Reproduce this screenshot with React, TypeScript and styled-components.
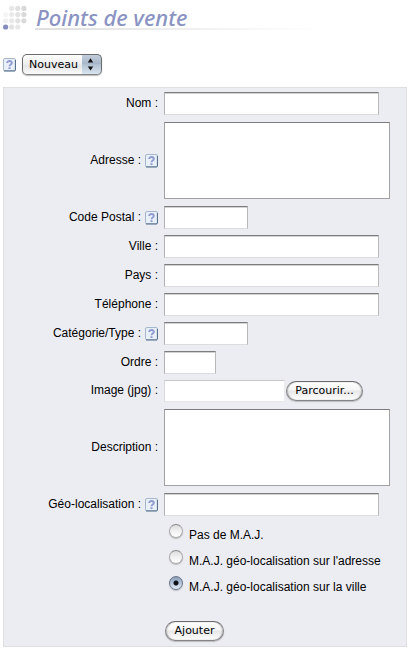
import React, { useRef, useState } from "react";
import styled, { createGlobalStyle } from "styled-components";

const GlobalStyle = createGlobalStyle`
  * { box-sizing: border-box; }
  body {
    margin: 0;
    background: #fff;
    color: #000;
    font: 12px/16px "Liberation Sans", Arial, sans-serif;
  }
`;

const Page = styled.main`
  padding: 4px 13px 5px 3px;
`;

const Header = styled.header`
  display: flex;
  align-items: flex-start;
  gap: 8px;
  height: 49px;
`;

const Dots = styled.svg`
  flex: none;
  width: 24px;
  height: 28px;
`;

const Title = styled.h1`
  position: relative;
  flex: 1;
  max-width: 284px;
  margin: 0;
  padding-left: 1px;
  color: #8b93c3;
  font: italic 500 22px/26px "Noto Sans", "Open Sans", sans-serif;

  &::after {
    content: "";
    position: absolute;
    left: 0;
    right: 0;
    top: 24px;
    height: 2px;
    background: linear-gradient(to right, #dedede, #fff);
  }
`;

const Picker = styled.div`
  display: flex;
  align-items: center;
  gap: 6px;
  height: 24px;
  margin-bottom: 10px;
`;

const HelpButton = styled.button`
  display: flex;
  flex: none;
  width: 13px;
  height: 14px;
  padding: 0;
  border: 0;
  background: none;
`;

const SelectFrame = styled.div`
  position: relative;
  height: 22px;
`;

const Select = styled.select`
  appearance: none;
  width: 80px;
  height: 21px;
  padding: 0 20px 0 6px;
  border: 1px solid #6c6c6c;
  border-bottom-color: #858585;
  border-radius: 5px;
  background:
    linear-gradient(#c3cedb, #a5b5c8 48%, #b1c0d0 50%, #dae6f0) right / 19px 100% no-repeat,
    linear-gradient(#fff, #ededed 50%, #e4e4e4 52%, #fafafa);
  box-shadow: 0 1px 1px #bbb;
  color: #000;
  font: 11px/19px "DejaVu Sans", sans-serif;
`;

const SelectArrows = styled.svg`
  position: absolute;
  right: 8px;
  top: 4px;
  width: 7px;
  height: 13px;
  pointer-events: none;
`;

const Panel = styled.form`
  display: flex;
  flex-direction: column;
  padding: 1px 0 5px;
  border: 1px solid #e0e0e2;
  background: #ecedf3;
`;

const rowHeights = { line: 29, file: 28, area: 85 };

const Row = styled.div<{ $size: keyof typeof rowHeights }>`
  display: grid;
  grid-template-columns: 154px minmax(0, 1fr);
  column-gap: 6px;
  align-items: center;
  min-height: ${(p) => rowHeights[p.$size]}px;
`;

const LabelCell = styled.div`
  display: flex;
  justify-content: flex-end;
  align-items: flex-start;
  gap: 4px;

  label {
    padding-bottom: 2px;
  }

  ${HelpButton} {
    margin-top: 2px;
  }
`;

const TextInput = styled.input<{ $width: number; $soft?: boolean }>`
  display: block;
  width: ${(p) => p.$width}px;
  max-width: 100%;
  height: ${(p) => (p.$soft ? 22 : 23)}px;
  padding: 2px 4px;
  border: 1px solid;
  border-color: ${(p) => (p.$soft ? "#c6c6c8 #ececef #e8e8ea #dadade" : "#7d7d80 #b9b9bc #dcdcdf #b2b2b6")};
  border-radius: 0;
  background: #fff;
  box-shadow: ${(p) => (p.$soft ? "none" : "inset 0 1px 0 #d2d2d2")};
  font: 12px/16px "Liberation Sans", Arial, sans-serif;
`;

const TextArea = styled.textarea`
  display: block;
  width: 226px;
  max-width: 100%;
  height: 77px;
  padding: 3px;
  resize: none;
  border: 1px solid #a2a2a5;
  border-top-color: #7d7d80;
  border-radius: 0;
  font: 12px/16px "Liberation Sans", Arial, sans-serif;
`;

const FileCell = styled.div`
  display: flex;
  align-items: center;
  gap: 1px;
`;

const PillButton = styled.button<{ $width: number }>`
  width: ${(p) => p.$width}px;
  height: 20px;
  padding: 0;
  border: 1px solid #858589;
  border-top-color: #6b6b6e;
  border-radius: 10px;
  background: linear-gradient(#fff, #f5f5f5 45%, #e7e7e7 50%, #fff);
  box-shadow: inset 1px 0 1px #bbb, inset -1px 0 1px #bbb, 0 1px 1px #bbb;
  color: #000;
  font: 11px/18px "DejaVu Sans", sans-serif;
  white-space: nowrap;
`;

const RadioGroup = styled.div`
  display: flex;
  flex-direction: column;
  padding: 4px 0 0 164px;
`;

const RadioLabel = styled.label`
  display: flex;
  align-items: flex-start;
  gap: 6px;
  height: 26px;
`;

const RadioText = styled.span`
  padding-top: 4px;
`;

const Radio = styled.input`
  appearance: none;
  flex: none;
  width: 14px;
  height: 14px;
  margin: 1px 0 0 1px;
  border: 1px solid #aaaaac;
  border-top-color: #8a8a8c;
  border-radius: 50%;
  background: linear-gradient(#ddd, #f1f1f1 50%, #fff);
  box-shadow: 0 1px 1px #bbb;

  &:checked {
    border-color: #66758a;
    background:
      radial-gradient(circle, #0c1017 0 2px, transparent 3px),
      linear-gradient(#8a9db8, #b4c5d9 50%, #e3eef8);
  }
`;

const Actions = styled.div`
  padding: 20px 0 0 161px;
`;

const dotRows = [
  ["#fff", "#e8e8e8", "#e0e0e0", "#d9d9d9"],
  ["#f5f5f5", "#eaeaea", "#e2e2e2", "#dadada"],
  ["#f0f0f0", "#e8e8e8", "#e1e1e1", "#dadada"],
  ["#858dc0", "#e1e1e1", "#e7e7e7", "#fff"],
];

function DotLogo() {
  return (
    <Dots viewBox="0 0 24 28" aria-hidden="true">
      {dotRows.map((row, y) =>
        row.map((fill, x) => (
          <circle key={`${x}-${y}`} cx={2.6 + x * 6.1} cy={4.4 + y * 6.2} r="2.6" fill={fill} />
        ))
      )}
    </Dots>
  );
}

function Help({ topic }: { topic: string }) {
  return (
    <HelpButton type="button" aria-label={`Aide : ${topic}`}>
      <svg width="13" height="14" viewBox="0 0 13 14">
        <rect x="0.5" y="0.5" width="12" height="12.5" rx="1.5" fill="#eaf0f8" stroke="#a5b7cc" />
        <path d="M1 12.9H12M12.4 2V12.5" stroke="#506985" fill="none" />
        <path d="M4.2 5C4.2 2.4 8.8 2.4 8.8 5C8.8 6.6 6.5 6.3 6.5 8.2" stroke="#8f9bd0" strokeWidth="1.9" fill="none" />
        <rect x="5.5" y="9.2" width="2" height="1.8" fill="#8f9bd0" />
      </svg>
    </HelpButton>
  );
}

interface FieldProps {
  id: string;
  label: string;
  help?: boolean;
  size?: keyof typeof rowHeights;
  children: React.ReactNode;
}

function Field({ id, label, help, size = "line", children }: FieldProps) {
  return (
    <Row $size={size}>
      <LabelCell>
        <label htmlFor={id}>{label} :</label>
        {help && <Help topic={label} />}
      </LabelCell>
      {children}
    </Row>
  );
}

const updateModes = [
  { value: "none", text: "Pas de M.A.J." },
  { value: "address", text: "M.A.J. géo-localisation sur l'adresse" },
  { value: "city", text: "M.A.J. géo-localisation sur la ville" },
];

export default function App() {
  const fileInput = useRef<HTMLInputElement>(null);
  const [fileName, setFileName] = useState("");

  return (
    <Page>
      <GlobalStyle />
      <Header>
        <DotLogo />
        <Title>Points de vente</Title>
      </Header>
      <Picker>
        <Help topic="Points de vente" />
        <SelectFrame>
          <Select aria-label="Point de vente" defaultValue="new">
            <option value="new">Nouveau</option>
          </Select>
          <SelectArrows viewBox="0 0 7 13" aria-hidden="true">
            <path d="M3.5 0.2L6.2 4.4H0.8ZM3.5 12.6L6.2 8.4H0.8Z" fill="#111" />
          </SelectArrows>
        </SelectFrame>
      </Picker>
      <Panel onSubmit={(e) => e.preventDefault()}>
        <Field id="nom" label="Nom"><TextInput id="nom" $width={215} /></Field>
        <Field id="adresse" label="Adresse" help size="area"><TextArea id="adresse" /></Field>
        <Field id="cp" label="Code Postal" help><TextInput id="cp" $width={84} /></Field>
        <Field id="ville" label="Ville"><TextInput id="ville" $width={215} /></Field>
        <Field id="pays" label="Pays"><TextInput id="pays" $width={215} /></Field>
        <Field id="tel" label="Téléphone"><TextInput id="tel" type="tel" $width={215} /></Field>
        <Field id="type" label="Catégorie/Type" help><TextInput id="type" $width={84} /></Field>
        <Field id="ordre" label="Ordre"><TextInput id="ordre" $width={52} /></Field>
        <Field id="image" label="Image (jpg)" size="file">
          <FileCell>
            <TextInput id="image" readOnly value={fileName} $width={121} $soft />
            <PillButton type="button" $width={77} onClick={() => fileInput.current?.click()}>
              Parcourir...
            </PillButton>
            <input
              ref={fileInput}
              type="file"
              accept="image/jpeg"
              hidden
              onChange={(e) => setFileName(e.target.files?.[0]?.name ?? "")}
            />
          </FileCell>
        </Field>
        <Field id="description" label="Description" size="area"><TextArea id="description" /></Field>
        <Field id="geo" label="Géo-localisation" help><TextInput id="geo" $width={215} /></Field>
        <RadioGroup role="radiogroup" aria-label="Mise à jour de la géo-localisation">
          {updateModes.map(({ value, text }) => (
            <RadioLabel key={value}>
              <Radio type="radio" name="maj" value={value} defaultChecked={value === "city"} />
              <RadioText>{text}</RadioText>
            </RadioLabel>
          ))}
        </RadioGroup>
        <Actions>
          <PillButton type="submit" $width={59}>Ajouter</PillButton>
        </Actions>
      </Panel>
    </Page>
  );
}
